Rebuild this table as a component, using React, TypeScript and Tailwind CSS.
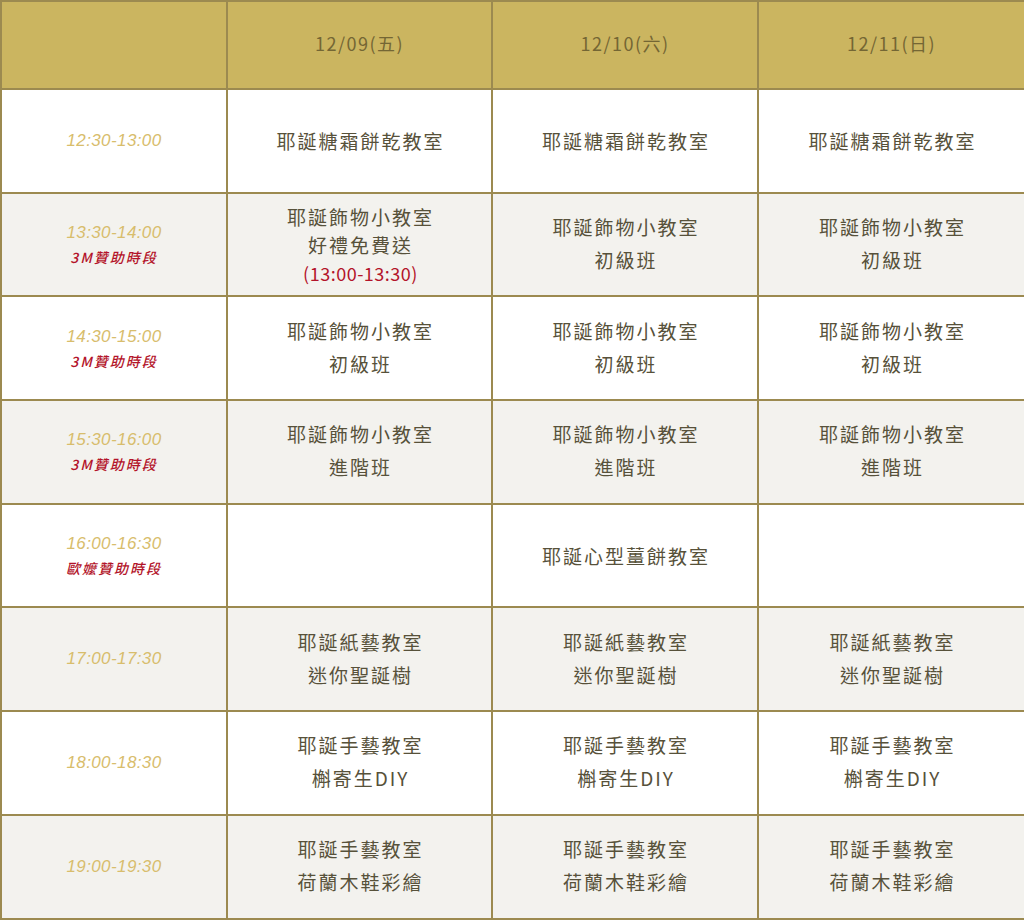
const cjk = "font-['Noto_Sans_CJK_TC','Noto_Sans',sans-serif]";

type Row = {
  time: string;
  sponsor?: string;
  cells: string[][];
};

const rows: Row[] = [
  { time: "12:30-13:00", cells: [["耶誕糖霜餅乾教室"], ["耶誕糖霜餅乾教室"], ["耶誕糖霜餅乾教室"]] },
  {
    time: "13:30-14:00",
    sponsor: "3M贊助時段",
    cells: [["耶誕飾物小教室", "好禮免費送", "(13:00-13:30)"], ["耶誕飾物小教室", "初級班"], ["耶誕飾物小教室", "初級班"]],
  },
  {
    time: "14:30-15:00",
    sponsor: "3M贊助時段",
    cells: [["耶誕飾物小教室", "初級班"], ["耶誕飾物小教室", "初級班"], ["耶誕飾物小教室", "初級班"]],
  },
  {
    time: "15:30-16:00",
    sponsor: "3M贊助時段",
    cells: [["耶誕飾物小教室", "進階班"], ["耶誕飾物小教室", "進階班"], ["耶誕飾物小教室", "進階班"]],
  },
  { time: "16:00-16:30", sponsor: "歐嬤贊助時段", cells: [[], ["耶誕心型薑餅教室"], []] },
  { time: "17:00-17:30", cells: [["耶誕紙藝教室", "迷你聖誕樹"], ["耶誕紙藝教室", "迷你聖誕樹"], ["耶誕紙藝教室", "迷你聖誕樹"]] },
  { time: "18:00-18:30", cells: [["耶誕手藝教室", "槲寄生DIY"], ["耶誕手藝教室", "槲寄生DIY"], ["耶誕手藝教室", "槲寄生DIY"]] },
  { time: "19:00-19:30", cells: [["耶誕手藝教室", "荷蘭木鞋彩繪"], ["耶誕手藝教室", "荷蘭木鞋彩繪"], ["耶誕手藝教室", "荷蘭木鞋彩繪"]] },
];

const days = ["12/09(五)", "12/10(六)", "12/11(日)"];

const Cell = ({ lines }: { lines: string[] }) => {
  const three = lines.length > 2;
  const two = lines.length === 2;
  return (
    <td className={`border-2 border-[#9c8a50] text-center align-middle ${cjk}`}>
      <div
        className={`flex flex-col items-center pl-[2px] text-[19px] font-normal tracking-[2px] text-[#57513a] ${three ? "leading-[28px]" : "leading-[33px]"} ${two ? "pb-[3px]" : ""}`}
      >
        {lines.map((l, i) => (
          <span key={i} className={l.startsWith("(") ? "text-[18px] tracking-[0.5px] text-[#b3142a]" : ""}>
            {l}
          </span>
        ))}
      </div>
    </td>
  );
};

export default function App() {
  return (
    <div className="w-[1024px] bg-white">
      <table className="w-[1024px] table-fixed border-collapse border-2 border-[#9c8a50]">
        <colgroup>
          <col className="w-[226px]" />
          <col className="w-[265px]" />
          <col className="w-[266px]" />
          <col className="w-[267px]" />
        </colgroup>
        <thead>
          <tr className="h-[88px] bg-[#cbb560]">
            <th className="border-2 border-[#9c8a50]" />
            {days.map((d) => (
              <th
                key={d}
                className={`border-2 border-[#9c8a50] pb-[3px] text-center text-[18px] font-normal tracking-[1.5px] text-[#746634] ${cjk}`}
              >
                {d}
              </th>
            ))}
          </tr>
        </thead>
        <tbody>
          {rows.map((r, i) => (
            <tr key={r.time} className={`h-[103.7px] ${i % 2 === 1 ? "bg-[#f3f2ee]" : "bg-white"}`}>
              <td className="border-2 border-[#9c8a50] text-center align-middle">
                <div className="flex flex-col items-center gap-[5px]">
                  <span className="font-['Liberation_Sans',Arial,sans-serif] text-[17px] italic leading-[20px] tracking-[0.4px] text-[#d8bd6c]">
                    {r.time}
                  </span>
                  {r.sponsor && (
                    <span className={`text-[14px] font-medium italic leading-[18px] tracking-[2px] text-[#b3142a] ${cjk}`}>
                      {r.sponsor}
                    </span>
                  )}
                </div>
              </td>
              {r.cells.map((c, j) => (
                <Cell key={j} lines={c} />
              ))}
            </tr>
          ))}
        </tbody>
      </table>
    </div>
  );
}
